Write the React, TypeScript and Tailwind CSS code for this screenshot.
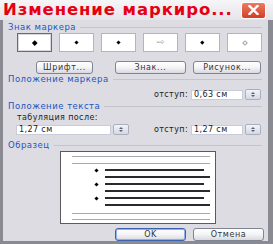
import React from 'react';

const ui = { fontFamily: '"DejaVu Sans", "Liberation Sans", sans-serif' };

function GroupLabel({ text }: { text: string }) {
  return (
    <div className="flex items-center h-[10px] pl-[5px] pr-[6px]">
      <span className="text-[8.5px] leading-[10px] tracking-[0.5px] text-[#2255c4] whitespace-nowrap">{text}</span>
      <div className="flex-1 h-px bg-[#c4c4cc] ml-[4px]" />
    </div>
  );
}

function XpButton({ label, w, focused }: { label: string; w: string; focused?: boolean }) {
  return (
    <div
      className={`${w} h-[13px] rounded-[3px] border ${
        focused ? 'border-[#3c62b0] shadow-[inset_0_0_0_1px_#8cb0e8]' : 'border-[#7e8594]'
      } bg-gradient-to-b from-white via-[#f4f4f6] to-[#d8d8e0] flex items-center justify-center`}
    >
      <span className="text-[8px] leading-none tracking-[0.6px] text-[#333]">{label}</span>
    </div>
  );
}

function Spin() {
  return (
    <div className="w-[16px] h-[11px] border border-[#a8b0c0] rounded-[2px] bg-gradient-to-b from-[#f2f4fa] to-[#d4d8e4] flex flex-col items-center justify-center gap-[1px]">
      <div className="w-0 h-0 border-l-[2px] border-r-[2px] border-b-[2px] border-l-transparent border-r-transparent border-b-[#5a6070]" />
      <div className="w-0 h-0 border-l-[2px] border-r-[2px] border-t-[2px] border-l-transparent border-r-transparent border-t-[#5a6070]" />
    </div>
  );
}

function Field({ value, w }: { value: string; w: string }) {
  return (
    <div className={`${w} h-[10px] bg-white border border-[#c8ccd8] flex items-center pl-[2px]`}>
      <span className="text-[8px] leading-none tracking-[0.4px] text-[#222]">{value}</span>
    </div>
  );
}

function BulletBox({ children, selected }: { children: React.ReactNode; selected?: boolean }) {
  return (
    <div
      className={`w-[35px] h-[19px] bg-white flex items-center justify-center ${
        selected ? 'border border-[#6a6a72] shadow-[inset_0_0_0_1px_#d8d8de]' : 'border border-[#b4b4bc]'
      }`}
    >
      {children}
    </div>
  );
}

const Dot = ({ s = 'w-[3px] h-[3px]' }: { s?: string }) => <div className={`${s} bg-black rotate-45`} />;

export default function App() {
  return (
    <div style={ui} className="w-[273px] h-[244px] bg-[#d6d6dc] flex flex-col overflow-hidden">
      {/* title bar */}
      <div className="h-[24px] bg-gradient-to-b from-[#f6f6f8] to-[#e4e4ea] flex items-center pl-[3px] pr-[7px]">
        <span className="text-[16.5px] font-bold leading-none text-[#e60012] tracking-[0.9px] whitespace-nowrap">
          Изменение маркиро...
        </span>
        <div className="ml-auto w-[25px] h-[17px] rounded-[3px] border border-white bg-gradient-to-b from-[#ec7a62] to-[#d23c22] flex items-center justify-center">
          <svg width="11" height="10" viewBox="0 0 11 10">
            <path d="M1.5 1 L9.5 9 M9.5 1 L1.5 9" stroke="white" strokeWidth="2.4" strokeLinecap="square" />
          </svg>
        </div>
      </div>

      {/* window frame + body */}
      <div className="flex-1 flex border-l-[3px] border-r-[5px] border-b-[3px] border-[#8a8a92] bg-[#dcdce2]">
        <div className="flex-1 flex flex-col pt-[2px]">
          <GroupLabel text="Знак маркера" />

          <div className="flex gap-[7px] pl-[14px] mt-[1px]">
            <BulletBox selected>
              <Dot s="w-[3.5px] h-[3.5px]" />
            </BulletBox>
            <BulletBox>
              <Dot />
            </BulletBox>
            <BulletBox>
              <Dot />
            </BulletBox>
            <BulletBox>
              <span className="text-[9px] leading-none text-[#9aa0a8]">⇨</span>
            </BulletBox>
            <BulletBox>
              <Dot s="w-[2.5px] h-[2.5px]" />
            </BulletBox>
            <BulletBox>
              <div className="w-[4px] h-[4px] border border-[#a0a0a8] rotate-45" />
            </BulletBox>
          </div>

          <div className="flex mt-[9px] pl-[33px]">
            <XpButton label="Шрифт..." w="w-[57px]" />
            <div className="ml-[22px]">
              <XpButton label="Знак..." w="w-[71px]" />
            </div>
            <div className="ml-[7px]">
              <XpButton label="Рисунок..." w="w-[68px]" />
            </div>
          </div>

          <GroupLabel text="Положение маркера" />

          <div className="flex items-center mt-[5px] justify-end pr-[7px]">
            <span className="text-[8px] leading-none tracking-[0.4px] text-[#222] mr-[3px]">отступ:</span>
            <Field value="0,63 см" w="w-[52px]" />
            <div className="ml-[2px]">
              <Spin />
            </div>
          </div>

          <div className="mt-[1px]">
            <GroupLabel text="Положение текста" />
          </div>

          <div className="pl-[14px] mt-[2px] text-[8px] leading-[9px] tracking-[0.4px] text-[#222]">табуляция после:</div>

          <div className="flex items-center mt-[2px] pl-[13px] pr-[7px]">
            <Field value="1,27 см" w="w-[95px]" />
            <div className="ml-[2px]">
              <Spin />
            </div>
            <span className="ml-auto text-[8px] leading-none tracking-[0.4px] text-[#222] mr-[3px]">отступ:</span>
            <Field value="1,27 см" w="w-[52px]" />
            <div className="ml-[2px]">
              <Spin />
            </div>
          </div>

          <div className="mt-[5px]">
            <GroupLabel text="Образец" />
          </div>

          {/* preview */}
          <div className="ml-[57px] mt-[1px] w-[156px] h-[73px] bg-white border border-[#5a5a60] flex flex-col pl-[11px] pr-[5px] pt-[4px]">
            <div className="h-px bg-[#a8a8ae]" />
            <div className="h-px bg-[#a8a8ae] mt-[6px]" />
            {[0, 1, 2].map((i) => (
              <div key={i} className="flex mt-[5px]">
                <div className="w-[33px] flex justify-end pr-[7px]">
                  <Dot s="w-[3px] h-[3px]" />
                </div>
                <div className="flex-1 flex flex-col">
                  <div className="h-[2px] bg-[#2a2a2e] mr-[6px]" />
                  <div className="h-[2px] bg-[#2a2a2e] mt-[5px]" />
                </div>
              </div>
            ))}
            <div className="h-px bg-[#a8a8ae] mt-[7px]" />
            <div className="h-px bg-[#a8a8ae] mt-[5px]" />
          </div>

          <div className="flex mt-[4px] pl-[112px]">
            <XpButton label="OK" w="w-[71px]" focused />
            <div className="ml-[7px]">
              <XpButton label="Отмена" w="w-[71px]" />
            </div>
          </div>
        </div>
      </div>
    </div>
  );
}
